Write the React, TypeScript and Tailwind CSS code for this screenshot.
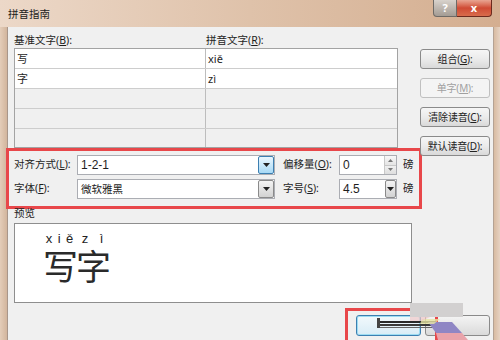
import React from 'react';

const ui = "font-['Noto_Sans','Noto_Sans_CJK_SC',sans-serif]";

function Mn({ text, k }: { text: string; k: string }) {
  // label with underlined access key, e.g. 基准文字(B):
  return (
    <span className="whitespace-nowrap">
      {text}(<span className="underline underline-offset-1">{k}</span>):
    </span>
  );
}

function DropBtn({ hot = false, wide = 16 }: { hot?: boolean; wide?: number }) {
  return (
    <div
      className={
        'flex items-center justify-center self-stretch border rounded-[2px] ' +
        (hot
          ? 'border-[#3c7fb1] bg-gradient-to-b from-[#eaf6fd] to-[#a7d9f5]'
          : 'border-[#8a8a8a] bg-gradient-to-b from-[#f4f4f4] to-[#d2d2d2]')
      }
      style={{ width: wide }}
    >
      <svg width="7" height="4" viewBox="0 0 7 4">
        <path d="M0 0h7L3.5 4z" fill="#222" />
      </svg>
    </div>
  );
}

function Btn({ label, k, disabled = false }: { label: string; k: string; disabled?: boolean }) {
  return (
    <div
      className={
        'h-[20px] w-[70px] flex items-center justify-center rounded-[3px] border text-[10px] tracking-[-0.2px] bg-gradient-to-b ' +
        (disabled
          ? 'border-[#c0c0c0] from-[#f4f4f4] to-[#f4f4f4] text-[#a0a0a0]'
          : 'border-[#8a8a8a] from-[#f6f6f6] via-[#ebebeb] to-[#d9d9d9] text-[#222]')
      }
    >
      <Mn text={label} k={k} />
    </div>
  );
}

export default function App() {
  const rows = [
    ['写', 'xiě'],
    ['字', 'zì'],
    ['', ''],
    ['', ''],
    ['', ''],
  ];

  return (
    <div className={'relative w-[500px] h-[340px] overflow-hidden bg-[#dcc3ad] ' + ui}>
      {/* title bar */}
      <div className="h-[27px] flex items-start justify-between bg-gradient-to-r from-[#ecd8c8] via-[#dfc2aa] to-[#d4ae90]">
        <div className="pl-[8px] pt-[7px] text-[10.5px] leading-[14px] text-[#1b1b1b]">拼音指南</div>
        <div className="flex mr-[8px]">
          <div className="w-[24px] h-[17px] flex items-center justify-center border border-t-0 border-[#6e6a66] rounded-bl-[4px] bg-gradient-to-b from-[#d8d2cc] to-[#a49c94] text-[11px] font-bold text-white">
            ?
          </div>
          <div className="w-[35px] h-[17px] flex items-center justify-center border border-t-0 border-l-0 border-[#6c2a1e] rounded-br-[4px] bg-gradient-to-b from-[#e8a592] via-[#cf4a34] to-[#d86c4c] text-[11px] font-bold text-white">
            x
          </div>
        </div>
      </div>

      <div className="flex h-[313px]">
        <div className="w-[8px] border-r border-[#a8968a] bg-gradient-to-r from-[#e4cdb9] to-[#d2b59d]" />

        {/* client area */}
        <div className="w-[485px] bg-[#f0f0f0] pt-[6px] pl-[6px] pr-[3px] flex flex-col text-[#1e1e1e]">
          <div className="flex gap-[8px]">
            {/* left column */}
            <div className="w-[398px] flex flex-col">
              <div className="h-[15px] flex text-[10.5px] leading-[14px]">
                <div className="w-[191px]">
                  <Mn text="基准文字" k="B" />
                </div>
                <div className="pl-[1px]">
                  <Mn text="拼音文字" k="R" />
                </div>
              </div>

              <div className="w-[384px] border border-[#a3a3a3] bg-[#f0f0f0]">
                {rows.map((r, i) => (
                  <div
                    key={i}
                    className={
                      'flex ' +
                      (i < 4 ? 'h-[20px] border-b border-[#cdcdcd] ' : 'h-[18px] ') +
                      (i < 2 ? 'bg-white' : '')
                    }
                  >
                    <div className="w-[191px] border-r border-[#bdbdbd] pl-[2px] text-[11px] leading-[19px]">
                      {r[0]}
                    </div>
                    <div className="flex-1 pl-[2px] text-[11px] leading-[19px]">{r[1]}</div>
                  </div>
                ))}
              </div>

              {/* highlighted options box */}
              <div className="-ml-[8px] w-[416px] border-[3px] border-[#e8474a] pt-[4px] pb-[7px] pl-[5px] flex flex-col gap-[4px] text-[10.5px]">
                <div className="flex items-center h-[20px]">
                  <div className="w-[63px]">
                    <Mn text="对齐方式" k="L" />
                  </div>
                  <div className="w-[198px] h-[20px] flex items-stretch bg-white border border-[#abadb3]">
                    <div className="flex-1 pl-[3px] text-[12px] leading-[18px] font-['Liberation_Sans',sans-serif]">1-2-1</div>
                    <DropBtn hot />
                  </div>
                  <div className="w-[56px] ml-[8px]">
                    <Mn text="偏移量" k="O" />
                  </div>
                  <div className="w-[58px] h-[20px] flex bg-white border border-[#abadb3]">
                    <div className="flex-1 pl-[3px] text-[12px] leading-[18px] font-['Liberation_Sans',sans-serif]">0</div>
                    <div className="w-[12px] flex flex-col border-l border-[#c8c8c8]">
                      <div className="flex-1 flex items-center justify-center bg-gradient-to-b from-[#f8f8f8] to-[#e4e4e4] border-b border-[#c8c8c8]">
                        <svg width="5" height="3" viewBox="0 0 5 3">
                          <path d="M0 3h5L2.5 0z" fill="#777" />
                        </svg>
                      </div>
                      <div className="flex-1 flex items-center justify-center bg-gradient-to-b from-[#f0f0f0] to-[#dedede]">
                        <svg width="5" height="3" viewBox="0 0 5 3">
                          <path d="M0 0h5L2.5 3z" fill="#777" />
                        </svg>
                      </div>
                    </div>
                  </div>
                  <div className="ml-[6px]">磅</div>
                </div>

                <div className="flex items-center h-[20px]">
                  <div className="w-[63px]">
                    <Mn text="字体" k="F" />
                  </div>
                  <div className="w-[198px] h-[20px] flex items-stretch bg-white border border-[#abadb3]">
                    <div className="flex-1 pl-[3px] text-[10.5px] leading-[18px]">微软雅黑</div>
                    <DropBtn />
                  </div>
                  <div className="w-[56px] ml-[8px]">
                    <Mn text="字号" k="S" />
                  </div>
                  <div className="w-[58px] h-[20px] flex items-stretch bg-white border border-[#abadb3]">
                    <div className="flex-1 pl-[3px] text-[12px] leading-[18px] font-['Liberation_Sans',sans-serif]">4.5</div>
                    <DropBtn wide={11} />
                  </div>
                  <div className="ml-[6px]">磅</div>
                </div>
              </div>

              <div className="-mt-[3px] h-[15px] text-[10.5px] leading-[15px]">预览</div>

              <div className="mt-[2px] h-[80px] bg-white border border-[#8e8e8e] pl-[28px] pt-[7px]">
                <div className="flex">
                  {[
                    ['xiě', '写'],
                    ['zì', '字'],
                  ].map(([py, ch]) => (
                    <div key={ch} className="w-[33px] flex flex-col">
                      <div className="h-[15px] flex justify-around text-[13px] leading-[15px] text-[#222] font-['Liberation_Sans',sans-serif]">
                        {py.split('').map((c, j) => (
                          <span key={j}>{c}</span>
                        ))}
                      </div>
                      <div className="mt-[1px] text-[35px] leading-[35px] text-[#2a2a2a] font-['Noto_Sans_CJK_SC',sans-serif]">
                        {ch}
                      </div>
                    </div>
                  ))}
                </div>
              </div>
            </div>

            {/* right buttons */}
            <div className="pt-[16px] flex flex-col gap-[9px]">
              <Btn label="组合" k="G" />
              <Btn label="单字" k="M" disabled />
              <Btn label="清除读音" k="C" />
              <Btn label="默认读音" k="D" />
            </div>
          </div>

          {/* dialog buttons (labels hidden under the capture smear) */}
          <div className="mt-[12px] flex justify-end gap-[4px]">
            <div className="w-[65px] h-[21px] rounded-[3px] border border-[#3c7fb1] bg-gradient-to-b from-[#f2f9fc] to-[#d8ecf6] shadow-[inset_0_0_0_1px_#9ddcf2]" />
            <div className="w-[65px] h-[21px] rounded-[3px] border border-[#8a8a8a] bg-gradient-to-b from-[#f4f4f4] to-[#dadada]" />
          </div>
        </div>

        <div className="flex-1 border-l border-[#b4a294] bg-gradient-to-r from-[#d8bba2] to-[#e6d2c2]" />
      </div>

      {/* red marker around the OK button */}
      <div className="absolute left-[345px] top-[308px] w-[93px] h-[40px] border-[3px] border-[#e8474a]" />

      {/* screen-capture smear over the buttons */}
      <svg className="absolute left-[370px] top-[300px]" width="110" height="40" viewBox="0 0 110 40">
        <rect x="40" y="3" width="53" height="14" fill="#d2d0d0" />
        <rect x="7" y="18" width="3" height="10" fill="#444" />
        <rect x="10" y="21" width="56" height="2" fill="#2a2a2a" />
        <rect x="10" y="24" width="58" height="2" fill="#3a3a3a" />
        <rect x="10" y="27" width="54" height="1" fill="#666" />
        <polygon points="58,22 82,22 92,33 66,33" fill="#8f86c4" />
        <polygon points="52,19 70,19 64,24 50,24" fill="#e8e6a4" opacity="0.8" />
        <polygon points="66,33 92,33 98,40 68,40" fill="#e9a3aa" />
        <polygon points="40,17 60,17 52,21 40,21" fill="#f0c8c8" opacity="0.7" />
      </svg>
    </div>
  );
}
